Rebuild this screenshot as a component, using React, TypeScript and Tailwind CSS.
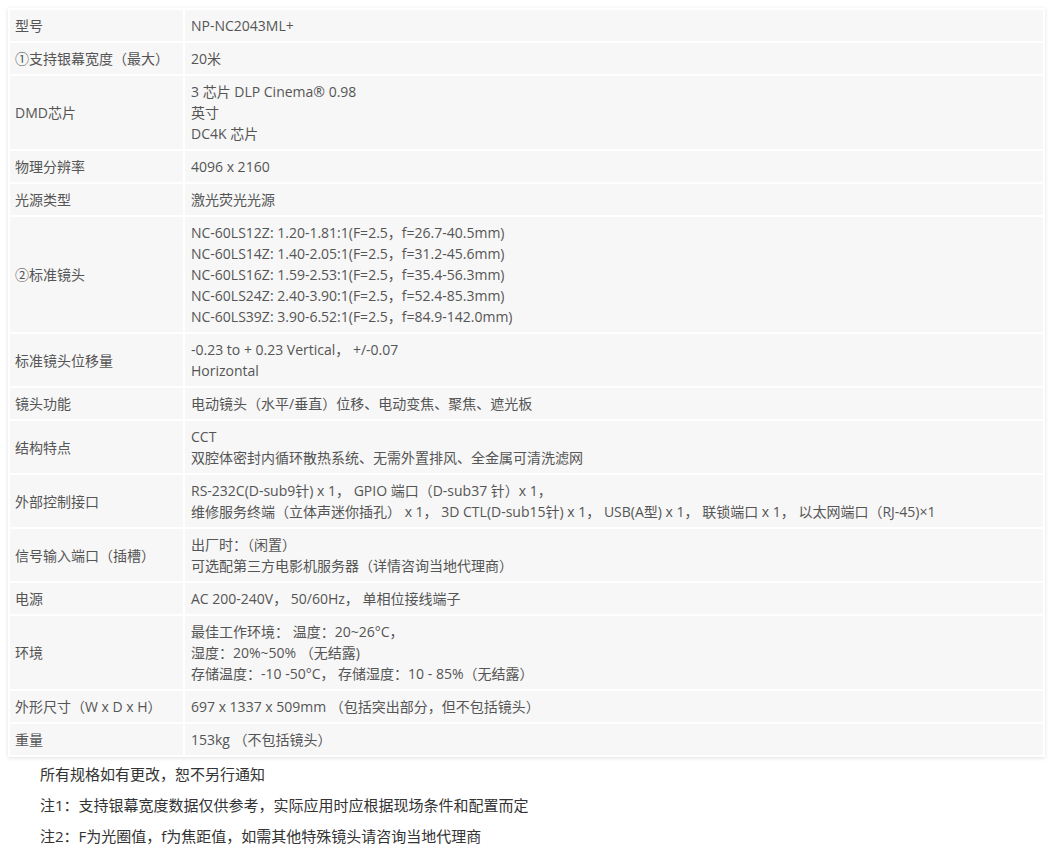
const rows: [string, string[]][] = [
  ["型号", ["NP-NC2043ML+"]],
  ["①支持银幕宽度（最大）", ["20米"]],
  ["DMD芯片", ["3 芯片 DLP Cinema® 0.98", "英寸", "DC4K 芯片"]],
  ["物理分辨率", ["4096 x 2160"]],
  ["光源类型", ["激光荧光光源"]],
  ["②标准镜头", [
    "NC-60LS12Z: 1.20-1.81:1(F=2.5，f=26.7-40.5mm)",
    "NC-60LS14Z: 1.40-2.05:1(F=2.5，f=31.2-45.6mm)",
    "NC-60LS16Z: 1.59-2.53:1(F=2.5，f=35.4-56.3mm)",
    "NC-60LS24Z: 2.40-3.90:1(F=2.5，f=52.4-85.3mm)",
    "NC-60LS39Z: 3.90-6.52:1(F=2.5，f=84.9-142.0mm)",
  ]],
  ["标准镜头位移量", ["-0.23 to + 0.23 Vertical，  +/-0.07", "Horizontal"]],
  ["镜头功能", ["电动镜头（水平/垂直）位移、电动变焦、聚焦、遮光板"]],
  ["结构特点", ["CCT", "双腔体密封内循环散热系统、无需外置排风、全金属可清洗滤网"]],
  ["外部控制接口", ["RS-232C(D-sub9针) x 1， GPIO 端口（D-sub37 针）x 1，", "维修服务终端（立体声迷你插孔） x 1， 3D CTL(D-sub15针) x 1， USB(A型) x 1， 联锁端口 x 1， 以太网端口（RJ-45)×1"]],
  ["信号输入端口（插槽）", ["出厂时：（闲置）", "可选配第三方电影机服务器（详情咨询当地代理商）"]],
  ["电源", ["AC 200-240V， 50/60Hz， 单相位接线端子"]],
  ["环境", ["最佳工作环境： 温度：20~26°C，", "湿度：20%~50% （无结露)", "存储温度：-10 -50°C， 存储湿度：10 - 85%（无结露）"]],
  ["外形尺寸（W x D x H）", ["697 x 1337 x 509mm （包括突出部分，但不包括镜头）"]],
  ["重量", ["153kg （不包括镜头）"]],
];

export default function App() {
  return (
    <div className="bg-white min-h-screen pt-[8px] px-[8px] text-[14px] leading-[21px] text-[#555]" style={{ fontFamily: '"Open Sans", "Noto Sans CJK SC", sans-serif' }}>
      <table className="w-[1037px] border-collapse shadow-[0_1px_4px_rgba(0,0,0,0.12)]">
        <tbody>
          {rows.map(([k, v]) => (
            <tr key={k}>
              <td className="w-[175px] bg-[#f7f7f7] border-2 border-white px-[5px] py-[5px] align-middle">{k}</td>
              <td className="bg-[#f7f7f7] border-2 border-white px-[6px] py-[5px] align-middle">
                {v.map((l) => <div key={l}>{l}</div>)}
              </td>
            </tr>
          ))}
        </tbody>
      </table>
      <div className="pl-[32px] pt-[2px] text-[15px] leading-[31px] text-[#333]">
        <div>所有规格如有更改，恕不另行通知</div>
        <div>注1：支持银幕宽度数据仅供参考，实际应用时应根据现场条件和配置而定</div>
        <div>注2：F为光圈值，f为焦距值，如需其他特殊镜头请咨询当地代理商</div>
      </div>
    </div>
  );
}
